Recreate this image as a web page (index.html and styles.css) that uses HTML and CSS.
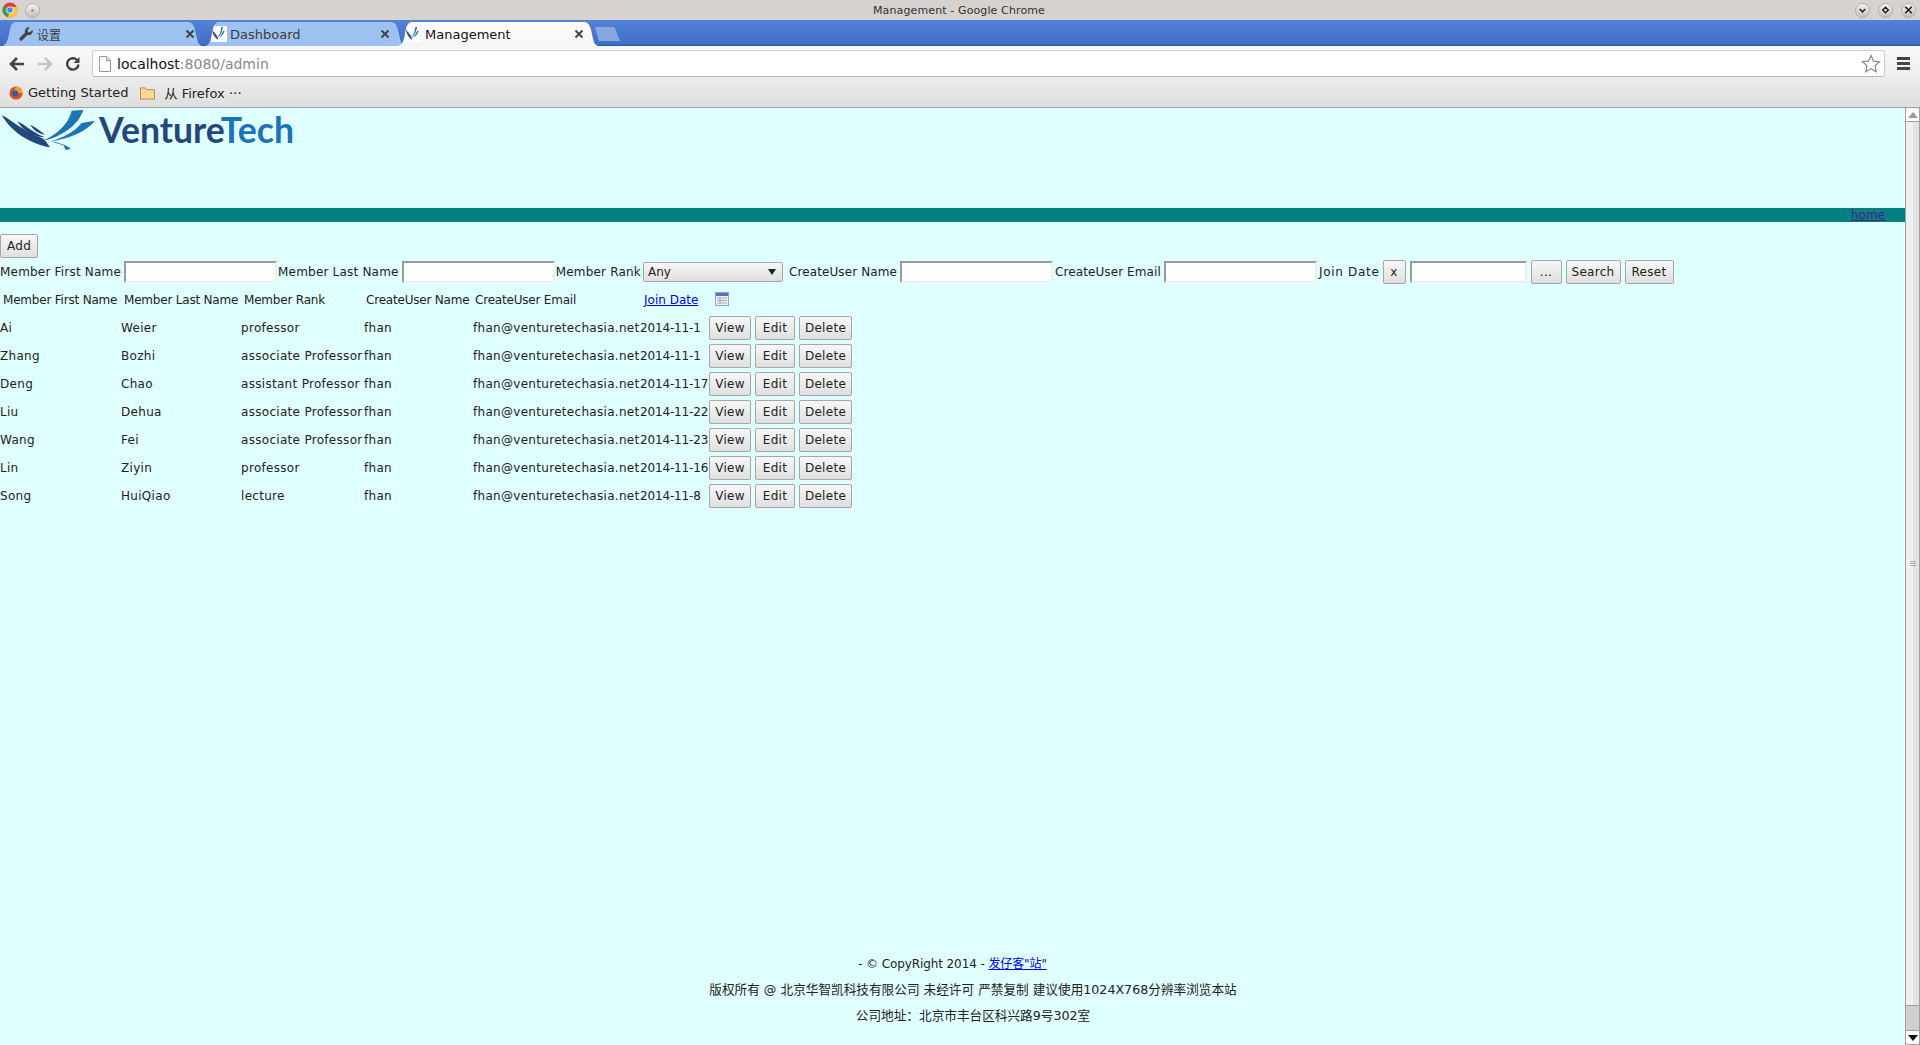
FILE: index.html
```html
<!DOCTYPE html>
<html lang="en">
<head>
<meta charset="utf-8">
<title>Management</title>
<link rel="stylesheet" href="styles.css">
</head>
<body>
<header class="browser">
  <div class="titlebar">
    <div class="title-left">
      <svg class="chrome-logo" viewBox="0 0 16 16" width="16" height="16"><circle cx="8" cy="8" r="7.5" fill="#d8453a"/><path d="M8 8 1.5 4.2A7.5 7.5 0 0 0 6 15.2z" fill="#3da34f"/><path d="M8 8 6 15.2A7.5 7.5 0 0 0 15 5H8z" fill="#f5c73c"/><circle cx="8" cy="8" r="3.6" fill="#fff"/><circle cx="8" cy="8" r="2.8" fill="#4a88e0"/></svg>
      <span class="win-btn"><i class="win-dot"></i></span>
    </div>
    <div class="title-text">Management - Google Chrome</div>
    <div class="title-right">
      <span class="win-btn"><svg viewBox="0 0 14 14" width="14" height="14"><path d="M4 6l3 3 3-3" fill="none" stroke="#222" stroke-width="1.6"/></svg></span>
      <span class="win-btn"><svg viewBox="0 0 14 14" width="14" height="14"><path d="M7 4l3 3-3 3-3-3z" fill="none" stroke="#222" stroke-width="1.6"/></svg></span>
      <span class="win-btn"><svg viewBox="0 0 14 14" width="14" height="14"><path d="M3.5 3.5l7 7M10.500 3.500l-7 7" fill="none" stroke="#222" stroke-width="1.8"/></svg></span>
    </div>
  </div>
  <div class="tabstrip">
    <div class="tab tab-first">
      <svg class="tab-icon" viewBox="0 0 16 16" width="16" height="16"><path d="M14.500 3.800 12 6.300l-2-.4-.4-2L12 1.500A4 4 0 0 0 7 6.600L1.800 11.800a1.700 1.700 0 0 0 2.400 2.400L9.400 9A4 4 0 0 0 14.500 3.800z" fill="#444"/></svg>
      <span class="tab-label">设置</span>
      <svg class="tab-close" viewBox="0 0 10 10" width="10" height="10"><path d="M1.500 1.500l7 7M8.500 1.500l-7 7" stroke="#444" stroke-width="2"/></svg>
    </div>
    <div class="tab tab-second">
      <svg class="tab-icon fav" viewBox="0 0 330 138" width="16" height="16" preserveAspectRatio="none"><path d="M5 22C30 32 60 65 130 92L150 118C100 110 40 80 5 22z" fill="#24477b"/><path d="M52 40C75 50 100 75 135 88 105 88 70 70 52 40z" fill="#24477b"/><path d="M215 8 250 6C235 50 190 85 125 100 170 80 205 50 215 8z" fill="#1b74b8"/><path d="M245 45 285 38C260 70 210 92 150 100 190 90 225 70 245 45z" fill="#1b74b8"/></svg>
      <span class="tab-label">Dashboard</span>
      <svg class="tab-close" viewBox="0 0 10 10" width="10" height="10"><path d="M1.500 1.500l7 7M8.500 1.500l-7 7" stroke="#444" stroke-width="2"/></svg>
    </div>
    <div class="tab tab-active">
      <svg class="tab-icon fav" viewBox="0 0 330 138" width="16" height="16" preserveAspectRatio="none"><path d="M5 22C30 32 60 65 130 92L150 118C100 110 40 80 5 22z" fill="#24477b"/><path d="M52 40C75 50 100 75 135 88 105 88 70 70 52 40z" fill="#24477b"/><path d="M215 8 250 6C235 50 190 85 125 100 170 80 205 50 215 8z" fill="#1b74b8"/><path d="M245 45 285 38C260 70 210 92 150 100 190 90 225 70 245 45z" fill="#1b74b8"/></svg>
      <span class="tab-label">Management</span>
      <svg class="tab-close" viewBox="0 0 10 10" width="10" height="10"><path d="M1.500 1.500l7 7M8.500 1.500l-7 7" stroke="#444" stroke-width="2"/></svg>
    </div>
    <div class="tab-new"></div>
  </div>
  <div class="toolbar">
    <svg class="nav-icon" viewBox="0 0 18 18" width="18" height="18"><path d="M9 3 3 9l6 6M3.500 9H16" fill="none" stroke="#444" stroke-width="2.600"/></svg>
    <svg class="nav-icon" viewBox="0 0 18 18" width="18" height="18"><path d="M9 3l6 6-6 6M14.500 9H2" fill="none" stroke="#c4c4c4" stroke-width="2.600"/></svg>
    <svg class="nav-icon" viewBox="0 0 18 18" width="18" height="18"><path d="M14.500 9.500A5.700 5.700 0 1 1 13 5" fill="none" stroke="#444" stroke-width="2.400"/><path d="M15.500 2v6h-6z" fill="#444"/></svg>
    <div class="omnibox">
      <svg class="page-icon" viewBox="0 0 12 16" width="12" height="16"><path d="M.5.500h7l4 4v11H.500zM7.500.500v4h4" fill="#fff" stroke="#999"/></svg>
      <span class="url">localhost<span class="url-dim">:8080/admin</span></span>
      <svg class="star" viewBox="0 0 20 20" width="20" height="20"><path d="M10 1.500l2.500 5.600 6 .6-4.500 4 1.300 6L10 14.600 4.700 17.700l1.300-6-4.500-4 6-.6z" fill="#fff" stroke="#888" stroke-width="1.200"/></svg>
    </div>
    <div class="menu-icon"><i></i><i></i><i></i></div>
  </div>
  <div class="bookmarks">
    <svg class="bm-icon" viewBox="0 0 16 16" width="14" height="14"><circle cx="8" cy="8" r="7.500" fill="#d9531e"/><path d="M8 .5a7.500 7.500 0 0 1 7.500 7.500H9L6 4.500z" fill="#f0a02c"/><circle cx="7" cy="8.500" r="3.600" fill="#3b5d9c"/></svg>
    <span class="bm-label">Getting Started</span>
    <svg class="bm-folder" viewBox="0 0 16 14" width="15" height="14"><path d="M.5 1.500h5l1.500 2h8.500v10H.500z" fill="#fbd894" stroke="#a88a50"/></svg>
    <span class="bm-label">从 Firefox <span class="cjk" lang="zh-CN">…</span></span>
  </div>
</header>

<div class="viewport">
  <main class="page">
    <div class="logo">
      <svg class="logo-mark" viewBox="0 0 330 138" width="110" height="46"><path d="M5 22C30 32 60 65 130 92 138 100 145 110 150 118 100 110 40 80 5 22z" fill="#24477b"/><path d="M52 40C75 50 100 75 135 88 105 88 70 70 52 40z" fill="#24477b"/><path d="M90 50C105 55 120 68 135 80 115 78 100 65 90 50z" fill="#24477b"/><path d="M215 8 250 6C235 50 190 85 125 100 170 80 205 50 215 8z" fill="#1b74b8"/><path d="M245 45 285 38C260 70 210 92 150 100 190 90 225 70 245 45z" fill="#1b74b8"/><path d="M150 100C175 103 200 112 212 122L198 127 190 112z" fill="#1b74b8"/></svg>
      <span class="logo-text"><span class="logo-venture">Venture</span><span class="logo-tech">Tech</span></span>
    </div>
    <div class="nav-band"><a class="home-link" href="#">home</a></div>
    <div class="actions"><button class="btn" type="button">Add</button></div>
    <form class="search">
      <label class="lbl">Member First Name</label><input class="field" type="text">
      <label class="lbl">Member Last Name</label><input class="field" type="text">
      <label class="lbl">Member Rank</label><span class="rank-wrap"><select class="rank"><option>Any</option></select></span>
      <label class="lbl lbl-cu">CreateUser Name</label><input class="field" type="text">
      <label class="lbl lbl-cu lbl-email">CreateUser Email</label><input class="field" type="text">
      <label class="lbl lbl-date">Join Date</label><button class="btn btn-x" type="button">x</button><input class="field field-date" type="text"><button class="btn btn-dots" type="button">...</button><button class="btn btn-search" type="button">Search</button><button class="btn btn-reset" type="button">Reset</button>
    </form>
    <table class="grid">
      <colgroup><col class="c1"><col class="c2"><col class="c3"><col class="c4"><col class="c5"><col class="c6"><col class="c7"></colgroup>
      <thead>
        <tr><th>Member First Name</th><th>Member Last Name</th><th>Member Rank</th><th class="th-tight">CreateUser Name</th><th class="th-tight">CreateUser Email</th><th class="th-date"><a href="#">Join Date</a></th><th class="th-icon"><svg viewBox="0 0 14 14" width="14" height="14"><rect x=".5" y=".5" width="13" height="13" fill="#eef2f7" stroke="#8da6c6"/><rect x="1" y="1" width="12" height="3" fill="#4a78c0"/><path d="M2 6h10M2 8.500h10M2 11h10M5 5v7" stroke="#a9a9a9"/></svg></th></tr>
      </thead>
      <tbody>
        <tr><td>Ai</td><td>Weier</td><td>professor</td><td>fhan</td><td>fhan@venturetechasia.net</td><td class="td-date">2014-11-1</td><td class="ops"><button class="btn btn-view" type="button">View</button><button class="btn btn-edit" type="button">Edit</button><button class="btn btn-del" type="button">Delete</button></td></tr>
        <tr><td>Zhang</td><td>Bozhi</td><td>associate Professor</td><td>fhan</td><td>fhan@venturetechasia.net</td><td class="td-date">2014-11-1</td><td class="ops"><button class="btn btn-view" type="button">View</button><button class="btn btn-edit" type="button">Edit</button><button class="btn btn-del" type="button">Delete</button></td></tr>
        <tr><td>Deng</td><td>Chao</td><td>assistant Professor</td><td>fhan</td><td>fhan@venturetechasia.net</td><td class="td-date">2014-11-17</td><td class="ops"><button class="btn btn-view" type="button">View</button><button class="btn btn-edit" type="button">Edit</button><button class="btn btn-del" type="button">Delete</button></td></tr>
        <tr><td>Liu</td><td>Dehua</td><td>associate Professor</td><td>fhan</td><td>fhan@venturetechasia.net</td><td class="td-date">2014-11-22</td><td class="ops"><button class="btn btn-view" type="button">View</button><button class="btn btn-edit" type="button">Edit</button><button class="btn btn-del" type="button">Delete</button></td></tr>
        <tr><td>Wang</td><td>Fei</td><td>associate Professor</td><td>fhan</td><td>fhan@venturetechasia.net</td><td class="td-date">2014-11-23</td><td class="ops"><button class="btn btn-view" type="button">View</button><button class="btn btn-edit" type="button">Edit</button><button class="btn btn-del" type="button">Delete</button></td></tr>
        <tr><td>Lin</td><td>Ziyin</td><td>professor</td><td>fhan</td><td>fhan@venturetechasia.net</td><td class="td-date">2014-11-16</td><td class="ops"><button class="btn btn-view" type="button">View</button><button class="btn btn-edit" type="button">Edit</button><button class="btn btn-del" type="button">Delete</button></td></tr>
        <tr><td>Song</td><td>HuiQiao</td><td>lecture</td><td>fhan</td><td>fhan@venturetechasia.net</td><td class="td-date">2014-11-8</td><td class="ops"><button class="btn btn-view" type="button">View</button><button class="btn btn-edit" type="button">Edit</button><button class="btn btn-del" type="button">Delete</button></td></tr>
      </tbody>
    </table>
    <footer class="foot">
      <p class="foot-copy">- © CopyRight 2014 - <a href="#">发仔客"站"</a></p>
      <p class="foot-cn">版权所有 @ 北京华智凯科技有限公司 未经许可 严禁复制 建议使用1024X768分辨率浏览本站</p>
      <p class="foot-cn">公司地址：北京市丰台区科兴路9号302室</p>
    </footer>
  </main>
  <div class="scrollbar">
    <div class="sb-btn sb-up"><svg viewBox="0 0 10 6" width="10" height="6"><path d="M5 0l5 6H0z" fill="#999"/></svg></div>
    <div class="sb-thumb"><i></i><i></i><i></i></div>
    <div class="sb-track"></div>
    <div class="sb-btn sb-down"><svg viewBox="0 0 10 6" width="10" height="6"><path d="M0 0h10L5 6z" fill="#111"/></svg></div>
  </div>
</div>
</body>
</html>
```

FILE: styles.css
```css
* { box-sizing: border-box; }
html, body { height: 100%; }
body {
  margin: 0;
  height: 1045px;
  overflow: hidden;
  display: flex;
  flex-direction: column;
  font-family: "DejaVu Sans", "Noto Sans CJK SC", sans-serif;
  font-size: 12px;
  color: #222;
  background: #e0ffff;
}

/* browser chrome */
.browser { flex: none; }
.titlebar {
  height: 20px;
  background: #d6d2cf;
  display: grid;
  grid-template-columns: 1fr auto 1fr;
  align-items: center;
  padding: 0 4px 0 2px;
}
.title-left, .title-right { display: flex; align-items: center; gap: 8px; }
.title-left { gap: 7px; }
.title-right { justify-content: flex-end; }
.title-text {
  font-size: 11px;
  letter-spacing: .12px;
  color: #333;
}
.chrome-logo { display: block; }
.win-btn {
  width: 15px;
  height: 15px;
  border-radius: 50%;
  background: linear-gradient(#f4f3f2, #c4c0bd);
  border: 1px solid #b0acaa;
  display: flex;
  align-items: center;
  justify-content: center;
}
.win-dot { width: 3px; height: 3px; border-radius: 50%; background: #999; }
.tabstrip {
  height: 26px;
  background: linear-gradient(#5482d6, #3f6ec5);
  border-bottom: 1px solid #2f5aa5;
  display: flex;
  align-items: flex-end;
}
.tab {
  width: 204px;
  height: 24px;
  margin-bottom: -1px;
  display: flex;
  align-items: center;
  background: #9dc1f0;
  color: #3c3c3c;
  font-size: 13px;
  clip-path: path("M0 24C5 24 7 22 9 12S12 0 17 0H187C192 0 194 2 196 12S199 24 204 24Z");
}
.tab-first { padding: 0 9px 0 18px; margin-right: -1px; }
.tab-second { padding: 0 17px 0 8px; margin-right: -11px; }
.tab-active { padding: 0 16px 0 9px; background: linear-gradient(#fff, #f5f5f5); color: #111; }
.tab-label { flex: 1; white-space: nowrap; padding-left: 3px; }
.tab-active .tab-label { padding-left: 4px; }
.tab-first .tab-label { font-size: 12px; padding-left: 3px; }
.tab-close { flex: none; display: block; }
.tab-icon { flex: none; display: block; }
.fav { background: #fff; }
.tab-new {
  width: 25px;
  height: 14px;
  margin: 0 0 4px -5px;
  background: #88a9de;
  clip-path: polygon(0 0, 78% 0, 100% 100%, 16% 100%);
}
.toolbar {
  height: 32px;
  background: linear-gradient(#f8f8f8, #eeeeee);
  display: flex;
  align-items: center;
  padding: 3px 10px 0 8px;
  gap: 10px;
}
.nav-icon { display: block; }
.omnibox {
  flex: 1;
  height: 27px;
  background: #fff;
  border: 1px solid #ccc;
  border-bottom: 1px solid #b5b5b5;
  border-radius: 3px;
  display: flex;
  align-items: center;
  padding: 0 3px 0 6px;
  gap: 6px;
}
.url { flex: 1; font-size: 14px; color: #111; }
.url-dim { color: #888; }
.star { display: block; }
.menu-icon {
  width: 13px;
  margin-left: 2px;
  display: flex;
  flex-direction: column;
  gap: 2px;
}
.menu-icon i { display: block; height: 3px; background: #444; }
.bookmarks {
  height: 30px;
  background: linear-gradient(#ececec, #dedede);
  border-bottom: 1px solid #a3a3a3;
  display: flex;
  align-items: center;
  padding-left: 9px;
  color: #222;
  font-size: 13px;
}
.bm-icon { margin-right: 5px; }
.bm-folder { margin-left: 11px; margin-right: 10px; }
.bm-label { white-space: nowrap; }
.cjk { font-family: "Noto Sans CJK SC", sans-serif; }

/* page */
.viewport { flex: 1; display: flex; min-height: 0; }
.page { flex: 1; min-width: 0; display: flex; flex-direction: column; }
.logo { height: 100px; display: flex; align-items: flex-start; }
.logo-mark { flex: none; display: block; margin-right: -11px; }
.logo-text {
  font-family: Lato, sans-serif;
  font-weight: 700;
  font-size: 35.600px;
  line-height: 42px;
  margin-top: 1px;
  white-space: nowrap;
}
.logo-venture { color: #24477b; }
.logo-tech { color: #1b74b8; }
.nav-band {
  height: 14px;
  background: #008080;
  text-align: right;
  padding-right: 20px;
  line-height: 15px;
}
.home-link { color: #551a8b; }
.actions { margin-top: 12px; height: 24px; }

.btn {
  font: inherit;
  color: #222;
  height: 24px;
  padding: 0;
  border: 1px solid #a6a6a6;
  border-radius: 2px;
  background: linear-gradient(#f7f7f7, #dfdfdf);
  text-align: center;
  letter-spacing: .3px;
}
.actions .btn { width: 38px; }

.search {
  display: flex;
  align-items: center;
  height: 24px;
  margin-top: 2px;
}
.lbl { white-space: nowrap; letter-spacing: .2px; }
.lbl-cu { letter-spacing: .1px; }
.lbl-email { margin-left: 1px; }
.lbl-date { letter-spacing: .7px; margin-left: 1px; }
.field {
  height: 22px;
  width: 153px;
  margin: 0 1px 0 3px;
  border: 2px solid;
  border-color: #9a9a9a #eeeeee #eeeeee #9a9a9a;
  background: #fff;
  padding: 0;
}
.rank-wrap {
  position: relative;
  display: block;
  flex: none;
  width: 140px;
  margin: 0 6px 0 2px;
}
.rank-wrap::after {
  content: "";
  position: absolute;
  right: 7px;
  top: 7px;
  border-style: solid;
  border-width: 6px 4px 0;
  border-color: #222 transparent transparent;
}
.rank {
  display: block;
  appearance: none;
  font: inherit;
  color: #222;
  width: 140px;
  height: 20px;
  padding: 0 0 0 4px;
  border: 1px solid #a6a6a6;
  border-radius: 2px;
  background: linear-gradient(#f7f7f7, #dfdfdf);
}
.field-date { width: 117px; margin: 0 4px; }
.btn-x { width: 23px; margin-left: 3px; }
.btn-dots { width: 31px; }
.btn-search { margin-left: 4px; width: 55px; }
.btn-reset { margin-left: 4px; width: 49px; }

.grid {
  table-layout: fixed;
  border-collapse: collapse;
  width: 860px;
  margin-top: 2px;
}
.c1 { width: 121px; } .c2 { width: 120px; } .c3 { width: 123px; }
.c4 { width: 109px; } .c5 { width: 167px; } .c6 { width: 69px; } .c7 { width: 151px; }
.grid th {
  font-weight: 400;
  text-align: left;
  white-space: nowrap;
  padding: 0 0 0 3px;
  height: 28px;
  letter-spacing: -.2px;
}
.grid .th-tight { padding-left: 2px; }
.grid td {
  padding: 0;
  height: 28px;
  white-space: nowrap;
  letter-spacing: .3px;
}
.grid .td-date { letter-spacing: -.15px; }
.grid a { color: #00e; }
.grid .th-date { padding-left: 4px; letter-spacing: 0; }
.grid .th-icon { padding-left: 6px; }
.th-icon svg { display: block; margin-top: -2px; }
.ops { display: flex; align-items: center; gap: 4px; }
.btn-view { width: 42px; }
.btn-edit { width: 40px; }
.btn-del { width: 53px; }

.foot { margin-top: auto; padding-bottom: 17px; text-align: center; }
.foot p { margin: 0; line-height: 25.500px; }
.foot a { color: #00e; }
.foot-copy { letter-spacing: -.1px; }
.foot-cn { font-size: 12.650px; padding-left: 41px; }

/* scrollbar */
.scrollbar {
  flex: none;
  width: 15px;
  display: flex;
  flex-direction: column;
  background: #d0d0d0;
  border-left: 1px solid #a0a0a0;
  border-right: 1px solid #a0a0a0;
}
.sb-btn {
  flex: none;
  height: 14px;
  background: #fff;
  border-radius: 3px 3px 0 0;
  border-bottom: 1px solid #a0a0a0;
  display: flex;
  align-items: center;
  justify-content: center;
}
.sb-down { border-radius: 0 0 3px 3px; border-top: 1px solid #a0a0a0; height: 15px; }
.sb-thumb {
  flex: none;
  height: 884px;
  background: linear-gradient(90deg, #f0f0f0 55%, #e4e4e4 55%);
  border-bottom: 1px solid #a0a0a0;
  display: flex;
  flex-direction: column;
  align-items: center;
  justify-content: center;
  gap: 1px;
}
.sb-thumb i { width: 6px; height: 1px; background: #aaa; }
.sb-track { flex: 1; }
```
